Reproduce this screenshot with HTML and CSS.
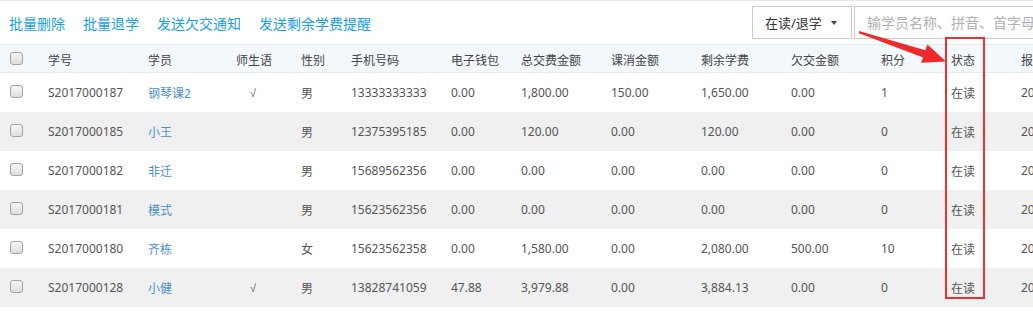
FILE: index.html
```html
<!DOCTYPE html>
<html lang="zh-CN">
<head>
  <meta charset="UTF-8">
  <title>学员列表</title>
  <link rel="stylesheet" href="styles.css">
</head>
<body>
  <div class="page">
    <div class="toolbar">
      <div class="actions">
        <a href="#">批量删除</a>
        <a href="#">批量退学</a>
        <a href="#">发送欠交通知</a>
        <a href="#">发送剩余学费提醒</a>
      </div>
      <div class="filter">
        <button class="status-btn">在读/退学<span class="caret"></span></button>
        <input class="search" type="text" placeholder="输学员名称、拼音、首字母">
      </div>
    </div>

    <table class="students">
      <thead>
        <tr>
          <th class="cb"><input type="checkbox"></th>
          <th class="w-no">学号</th>
          <th class="w-name">学员</th>
          <th class="w-tag">师生语</th>
          <th class="w-sex">性别</th>
          <th class="w-phone">手机号码</th>
          <th class="w-wallet">电子钱包</th>
          <th class="w-money">总交费金额</th>
          <th class="w-money">课消金额</th>
          <th class="w-money">剩余学费</th>
          <th class="w-money">欠交金额</th>
          <th class="w-score">积分</th>
          <th class="w-score">状态</th>
          <th class="w-date">报名日期</th>
        </tr>
      </thead>
      <tbody>
        <tr>
          <td class="cb"><input type="checkbox"></td>
          <td>S2017000187</td><td><a href="#">钢琴课2</a></td><td class="tick">√</td><td>男</td>
          <td>13333333333</td><td>0.00</td><td>1,800.00</td><td>150.00</td><td>1,650.00</td><td>0.00</td>
          <td>1</td><td>在读</td><td>2017-08-21</td>
        </tr>
        <tr>
          <td class="cb"><input type="checkbox"></td>
          <td>S2017000185</td><td><a href="#">小王</a></td><td class="tick"></td><td>男</td>
          <td>12375395185</td><td>0.00</td><td>120.00</td><td>0.00</td><td>120.00</td><td>0.00</td>
          <td>0</td><td>在读</td><td>2017-08-18</td>
        </tr>
        <tr>
          <td class="cb"><input type="checkbox"></td>
          <td>S2017000182</td><td><a href="#">非迁</a></td><td class="tick"></td><td>男</td>
          <td>15689562356</td><td>0.00</td><td>0.00</td><td>0.00</td><td>0.00</td><td>0.00</td>
          <td>0</td><td>在读</td><td>2017-08-15</td>
        </tr>
        <tr>
          <td class="cb"><input type="checkbox"></td>
          <td>S2017000181</td><td><a href="#">模式</a></td><td class="tick"></td><td>男</td>
          <td>15623562356</td><td>0.00</td><td>0.00</td><td>0.00</td><td>0.00</td><td>0.00</td>
          <td>0</td><td>在读</td><td>2017-08-15</td>
        </tr>
        <tr>
          <td class="cb"><input type="checkbox"></td>
          <td>S2017000180</td><td><a href="#">齐栋</a></td><td class="tick"></td><td>女</td>
          <td>15623562358</td><td>0.00</td><td>1,580.00</td><td>0.00</td><td>2,080.00</td><td>500.00</td>
          <td>10</td><td>在读</td><td>2017-08-14</td>
        </tr>
        <tr>
          <td class="cb"><input type="checkbox"></td>
          <td>S2017000128</td><td><a href="#">小健</a></td><td class="tick">√</td><td>男</td>
          <td>13828741059</td><td>47.88</td><td>3,979.88</td><td>0.00</td><td>3,884.13</td><td>0.00</td>
          <td>0</td><td>在读</td><td>2017-07-30</td>
        </tr>
        <tr>
          <td class="cb"><input type="checkbox"></td>
          <td>S2017000127</td><td><a href="#">小李</a></td><td class="tick"></td><td>男</td>
          <td>13800000000</td><td>0.00</td><td>0.00</td><td>0.00</td><td>0.00</td><td>0.00</td>
          <td>0</td><td>在读</td><td>2017-07-28</td>
        </tr>
      </tbody>
    </table>

    <!-- annotation: red box and arrow over the status column -->
    <div class="mark-box"></div>
    <svg class="mark-arrow" width="1033" height="318" viewBox="0 0 1033 318">
      <polygon points="859,31 925.3,50.2 927.4,44.6 946,61.5 921,62.8 923.2,57.4 859,33.2" fill="#ee2a2a"/>
    </svg>
  </div>
</body>
</html>
```

FILE: styles.css
```css
body { margin: 0; overflow: hidden; font-family: "Noto Sans", "Noto Sans CJK SC", sans-serif; color: #555; background: #fff; }
.page { position: relative; width: 1133px; }

.toolbar {
  display: flex; align-items: center;
  height: 43px; border-top: 1px solid #e6e6e6;
  padding: 0 9px; box-sizing: content-box;
}
.actions { display: flex; gap: 18px; }
.actions a { color: #179ff0; font-size: 14px; text-decoration: none; }
.filter { display: flex; gap: 2px; margin-left: auto; margin-right: -9px; }
.status-btn {
  width: 100px; height: 33px; padding: 0 0 0 12px;
  display: flex; align-items: center;
  background: #fff; border: 1px solid #ccc; border-radius: 0;
  font-family: inherit; font-size: 13px; color: #333;
}
.caret {
  margin-left: 9px; width: 0; height: 0;
  border-top: 4px solid #444; border-left: 3px solid transparent; border-right: 3px solid transparent;
}
.search {
  width: 279px; height: 33px; box-sizing: border-box; padding: 0 12px;
  border: 1px solid #ccc; border-radius: 0;
  font-family: inherit; font-size: 14px; color: #333;
}
.search::placeholder { color: #b0b0b0; }

.students { border-collapse: collapse; table-layout: fixed; width: 1133px; font-size: 12px; }
.students th, .students td { padding: 0 0 0 8px; text-align: left; white-space: nowrap; overflow: hidden; }
.students th {
  height: 25px; padding-top: 2px; font-weight: normal; color: #444;
  background: #f3f8fd; border-top: 1px solid #e2ebf4; border-bottom: 1px solid #e2ebf4;
}
.students td { height: 39px; }
.students tbody tr:nth-child(even) { background: #f0f0f0; }
.students td a { color: #4a8fd3; text-decoration: none; }
.students .cb { width: 30px; padding-left: 10px; }
.students .tick { padding-left: 22px; font-family: "Liberation Sans", sans-serif; font-size: 11px; color: #555; }

.w-no { width: 92px; }
.w-name { width: 80px; }
.w-tag { width: 57px; }
.w-sex { width: 42px; }
.w-phone { width: 92px; }
.w-wallet { width: 62px; }
.w-money { width: 82px; }
.w-score { width: 62px; }
.w-date { width: 112px; }

input[type="checkbox"] {
  appearance: none; -webkit-appearance: none;
  display: block; margin: 0; width: 13px; height: 13px; box-sizing: border-box;
  border: 1px solid #a3a3a3; border-radius: 3px;
  background: linear-gradient(#f7f7f7, #dedede);
}
thead input[type="checkbox"] { margin-top: -2px; }
tbody input[type="checkbox"] { margin-top: -3px; }

.mark-box {
  position: absolute; left: 945px; top: 37px; width: 36px; height: 258px;
  border: 2px solid #e8322e;
}
.mark-arrow { position: absolute; left: 0; top: 0; pointer-events: none; }
```
